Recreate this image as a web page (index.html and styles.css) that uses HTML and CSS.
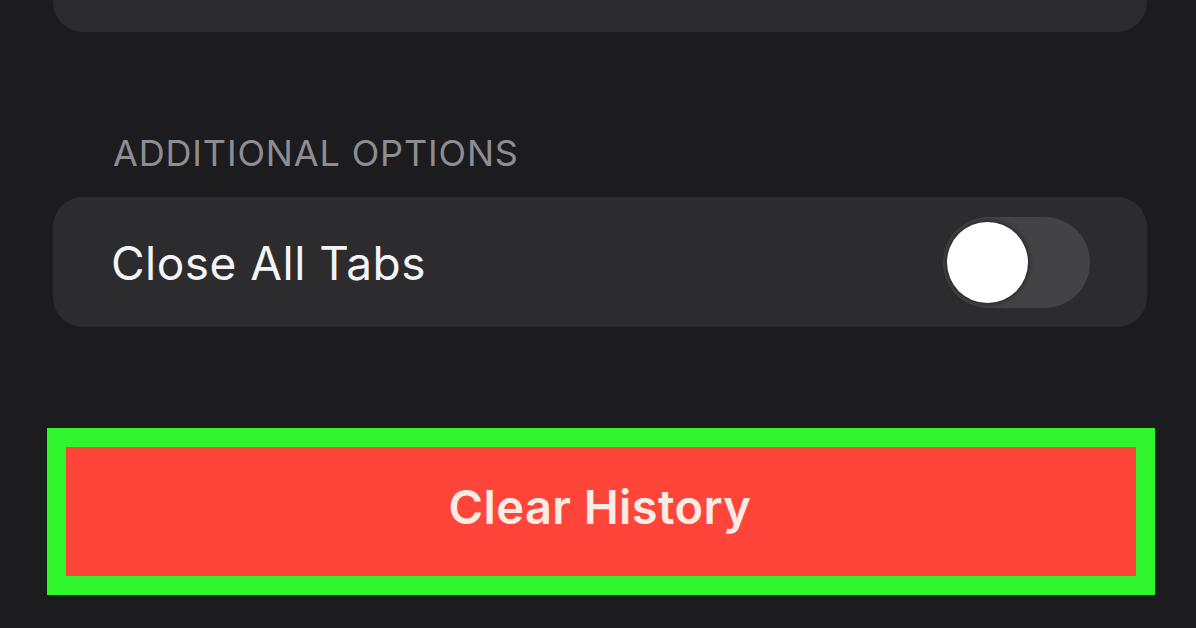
FILE: index.html
```html
<!DOCTYPE html>
<html>
<head>
<meta charset="utf-8">
<link rel="stylesheet" href="styles.css">
</head>
<body>
<div class="page">
  <div class="card-top"></div>
  <div class="section-label">ADDITIONAL OPTIONS</div>
  <div class="card row">
    <span class="row-title">Close All Tabs</span>
    <span class="toggle"><span class="knob"></span></span>
  </div>
  <div class="button-frame">
    <div class="danger-button">Clear History</div>
  </div>
</div>
</body>
</html>
```

FILE: styles.css
```css
html, body {
  margin: 0;
  padding: 0;
  background: #1c1c1e;
  width: 1196px;
  height: 628px;
  overflow: hidden;
  font-family: Inter, "Liberation Sans", sans-serif;
}
.page {
  padding: 0 49px 0 53px;
}
.card-top {
  height: 32px;
  background: #2c2c2e;
  border-radius: 0 0 30px 30px;
}
.section-label {
  margin: 99px 0 22px 60px;
  font-size: 36px;
  line-height: 44px;
  color: #8d8d92;
  letter-spacing: 0.85px;
}
.card {
  background: #2c2c2e;
  border-radius: 30px;
}
.row {
  height: 130px;
  display: flex;
  align-items: center;
  justify-content: space-between;
  padding: 0 57px 0 58px;
}
.row-title {
  font-size: 46px;
  color: #f4f4f6;
  letter-spacing: 0.5px;
  margin-top: 2px;
}
.toggle {
  width: 147px;
  height: 91px;
  border-radius: 46px;
  background: #434347;
  display: flex;
  align-items: center;
  padding-left: 4px;
  box-sizing: border-box;
}
.knob {
  width: 81px;
  height: 81px;
  border-radius: 50%;
  background: #ffffff;
  box-shadow: 0 0 4px 2px rgba(0,0,0,0.35);
}
.button-frame {
  margin: 101px -8px 0 -6px;
  border: 19px solid #30f52a;
  background: #ff453a;
  height: 129px;
  display: flex;
  align-items: center;
  justify-content: center;
  box-shadow: 0 0 2px 1px #0a2a0a;
}
.danger-button {
  font-size: 47px;
  font-weight: 600;
  color: #fdece4;
  letter-spacing: 0.4px;
  margin: 0 0 10px -2px;
}
```
